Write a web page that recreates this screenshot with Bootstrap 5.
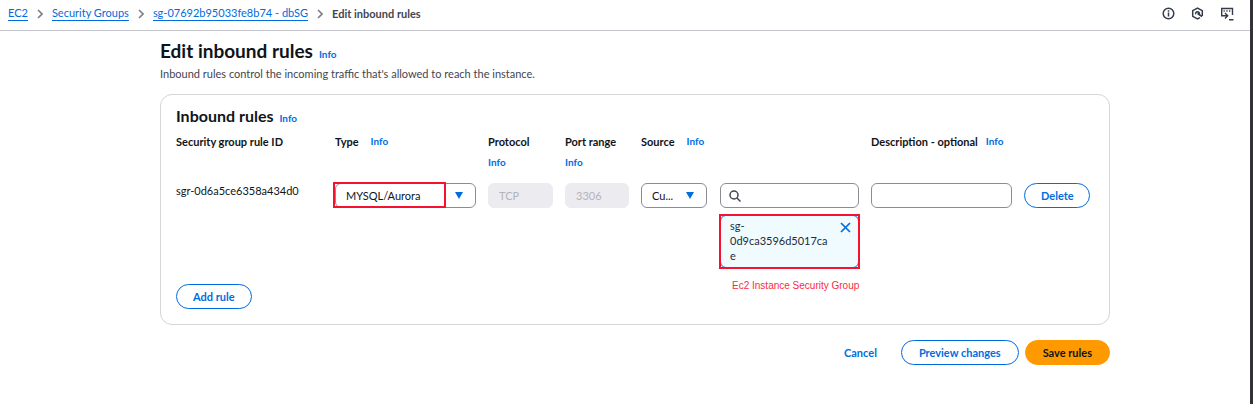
<!DOCTYPE html>
<html lang="en">
<head>
<meta charset="utf-8">
<meta name="viewport" content="width=device-width, initial-scale=1">
<title>Edit inbound rules</title>
<link href="https://cdn.jsdelivr.net/npm/bootstrap@5.3.0/dist/css/bootstrap.min.css" rel="stylesheet">
<style>
  :root { --blue: #006ce0; --ink: #0f141a; --line: #8c8c94; --red: #f5112f; }
  body { font-family: Lato, "Open Sans", sans-serif; font-size: 11px; line-height: 15px; color: var(--ink); background: #fff; }
  a { color: var(--blue); }
  .page { min-height: 100vh; border-right: 3px solid #303236; }
  .topbar { height: 31px; border-bottom: 1px solid #c6c6cd; padding: 0 16px 3px 8px; }
  .crumbs { gap: 9px; }
  .crumbs a { text-decoration: none; border-bottom: 1px solid var(--blue); line-height: 14px; }
  .crumbs .current { color: #424650; font-weight: 700; }
  .tool { border: 0; background: none; padding: 0; line-height: 0; color: #343b49; }
  .shell { padding-left: 20px; }
  .inner { max-width: 950px; margin: 0 auto; }
  .titled { gap: 6px; }
  h1 { font-size: 19px; line-height: 24px; font-weight: 700; margin: 0; }
  h2 { font-size: 16px; line-height: 20px; font-weight: 700; margin: 0; }
  .info { font-size: 10px; font-weight: 700; text-decoration: none; }
  .intro { color: #424650; margin: 3px 0 13px; }
  .panel { border: 1px solid #d5d5da; border-radius: 12px; padding: 11px 19px 15px 15px; }
  .rules { display: grid; column-gap: 12px; grid-template-columns: 147fr 141fr 65fr 64fr 218fr 141fr 66fr; }
  .rules > * { min-width: 0; }
  .heads { margin-top: 8px; height: 49px; font-weight: 700; line-height: 15px; }
  .heads .stacked { display: block; margin-top: 6px; }
  .field { width: 100%; height: 25px; border: 1px solid var(--line); border-radius: 6px; font-size: 11px; line-height: 15px; padding: 0 10px; color: var(--ink); background-color: #fff; }
  .field:disabled { background: #ebebf0; border-color: #ebebf0; color: #b4b4bb; }
  select.field { appearance: none; padding-right: 24px; background: #fff url("data:image/svg+xml,%3Csvg xmlns='http://www.w3.org/2000/svg' viewBox='0 0 8 7'%3E%3Cpath d='M0 0h8L4 7z' fill='%23006ce0'/%3E%3C/svg%3E") no-repeat right 12px center / 8px 7px; }
  .marked::after { content: ""; position: absolute; left: -2px; top: -1px; width: 113px; height: 26px; border: 2px solid var(--red); pointer-events: none; }
  .source { display: grid; grid-template-columns: 66fr 139fr; column-gap: 13px; }
  .search svg { position: absolute; left: 9px; top: 7px; }
  .search .field { padding-left: 28px; }
  .token { position: relative; margin-top: 7px; border: 1px solid var(--blue); border-radius: 6px; background: #f0fbff; padding: 2px 7px 2px 9px; color: #232b37; height: 53px; }
  .token::after { content: ""; position: absolute; inset: -2px; border: 2px solid var(--red); pointer-events: none; }
  .token span { width: 100px; overflow-wrap: anywhere; }
  .token button { border: 0; background: none; padding: 0; line-height: 0; margin-top: 4px; }
  .caption-note { position: absolute; top: 100%; left: 12px; font: 10px/14px "Liberation Sans", Arial, sans-serif; color: #fb2a3f; margin: 11px 0 0; white-space: nowrap; }
  .pill { height: 25px; border-radius: 13px; border: 1px solid var(--blue); background: #fff; color: var(--blue); font-size: 11px; font-weight: 700; line-height: 15px; padding: 0 16px; white-space: nowrap; }
  .pill.plain { border-color: transparent; }
  .pill.save { background: #ff9900; border-color: #ff9900; color: var(--ink); }
  .actions { margin-top: 15px; gap: 6px; }
  .actions .pill { padding: 0 17px; }
</style>
</head>
<body>
<div class="page">
  <header class="topbar d-flex align-items-center justify-content-between">
    <nav class="crumbs d-flex align-items-center" aria-label="Breadcrumb">
      <a href="#">EC2</a>
      <svg width="6" height="10" viewBox="0 0 6 10" fill="none" stroke="#7d7f86" stroke-width="1.6"><path d="M1 1l4 4-4 4"/></svg>
      <a href="#">Security Groups</a>
      <svg width="6" height="10" viewBox="0 0 6 10" fill="none" stroke="#7d7f86" stroke-width="1.6"><path d="M1 1l4 4-4 4"/></svg>
      <a href="#">sg-07692b95033fe8b74 - dbSG</a>
      <svg width="6" height="10" viewBox="0 0 6 10" fill="none" stroke="#7d7f86" stroke-width="1.6"><path d="M1 1l4 4-4 4"/></svg>
      <span class="current" aria-current="page">Edit inbound rules</span>
    </nav>
    <div class="d-flex align-items-center gap-3">
      <button class="tool" aria-label="Information"><svg width="13" height="13" viewBox="0 0 13 13" fill="none" stroke="currentColor" stroke-width="1.5"><circle cx="6.500" cy="6.500" r="5.300"/><path d="M6.500 5.600v4M6.500 3.200v1.500"/></svg></button>
      <button class="tool" aria-label="Status"><svg width="13" height="13" viewBox="0 0 13 13" fill="none" stroke="currentColor" stroke-width="1.5"><path d="M9 10.700L6.500 12 1.700 9.300V3.700L6.500 1l4.800 2.700v5.300"/><path d="M4.700 7.200a1.900 1.900 0 1 1 3.600 0M6.500 6.500l4.600 3"/></svg></button>
      <button class="tool" aria-label="CloudShell"><svg width="14" height="14" viewBox="0 0 14 14" fill="none" stroke="currentColor" stroke-width="1.400"><path d="M1.700 8V1.500h10.800V8M3.500 4h1.300M6.300 4h1.300M9 4h1.300M1 8.700h6M5 6l2.700 2.700L5 11.400M9 12.700h4.500"/></svg></button>
    </div>
  </header>

  <main class="shell">
    <form class="inner" onsubmit="return false">
      <div class="titled d-flex align-items-baseline pt-2">
        <h1>Edit inbound rules</h1><a class="info" href="#">Info</a>
      </div>
      <p class="intro">Inbound rules control the incoming traffic that's allowed to reach the instance.</p>

      <section class="panel">
        <div class="titled d-flex align-items-baseline">
          <h2>Inbound rules</h2><a class="info" href="#">Info</a>
        </div>
        <div class="rules heads">
          <div>Security group rule ID</div>
          <div class="d-flex gap-2"><label for="type">Type</label><a class="info ms-1" href="#">Info</a></div>
          <div><label for="protocol">Protocol</label><a class="info stacked" href="#">Info</a></div>
          <div><label for="port">Port range</label><a class="info stacked" href="#">Info</a></div>
          <div class="d-flex gap-2"><label for="source">Source</label><a class="info ms-1" href="#">Info</a></div>
          <div class="d-flex text-nowrap"><label for="description">Description - optional</label><a class="info ms-2" href="#">Info</a></div>
        </div>
        <div class="rules">
          <div>sgr-0d6a5ce6358a434d0</div>
          <div class="marked position-relative align-self-start"><select class="field" id="type"><option>MYSQL/Aurora</option></select></div>
          <div><input class="field" id="protocol" value="TCP" disabled></div>
          <div><input class="field" id="port" value="3306" disabled></div>
          <div class="source">
            <div><select class="field" id="source"><option>Cu...</option></select></div>
            <div class="position-relative">
              <div class="search position-relative">
                <input class="field" type="text" aria-label="Search source">
                <svg width="12" height="12" viewBox="0 0 12 12" fill="none" stroke="#424650" stroke-width="1.500"><circle cx="5" cy="5" r="4"/><path d="M8 8l3.500 3.500"/></svg>
              </div>
              <div class="token d-flex justify-content-between align-items-start">
                <span>sg-<br>0d9ca3596d5017ca<br>e</span>
                <button type="button" aria-label="Remove"><svg width="11" height="11" viewBox="0 0 11 11" stroke="#006ce0" stroke-width="1.700"><path d="M1 1l9 9M10 1l-9 9"/></svg></button>
              </div>
              <p class="caption-note">Ec2 Instance Security Group</p>
            </div>
          </div>
          <div><input class="field" id="description" type="text"></div>
          <div><button class="pill w-100" type="button">Delete</button></div>
        </div>
        <button class="pill mt-3" type="button">Add rule</button>
      </section>

      <div class="actions d-flex justify-content-end">
        <button class="pill plain" type="button">Cancel</button>
        <button class="pill" type="button">Preview changes</button>
        <button class="pill save" type="submit">Save rules</button>
      </div>
    </form>
  </main>
</div>
<script src="https://cdn.jsdelivr.net/npm/bootstrap@5.3.0/dist/js/bootstrap.bundle.min.js"></script>
</body>
</html>
